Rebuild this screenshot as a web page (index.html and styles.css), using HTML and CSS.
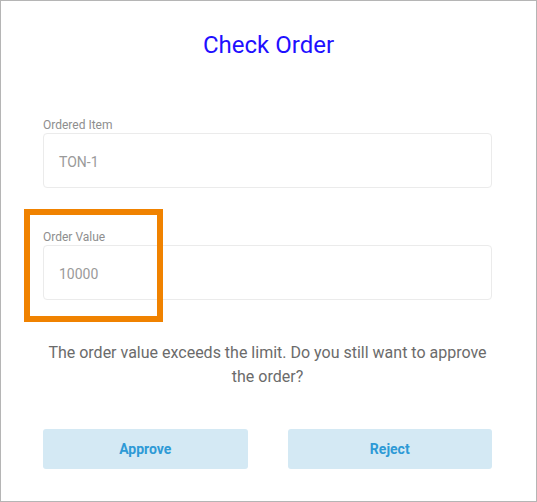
FILE: index.html
```html
<!DOCTYPE html>
<html>
<head>
<meta charset="utf-8">
<link rel="stylesheet" href="styles.css">
</head>
<body>
<div class="page">
  <h1 class="title">Check Order</h1>
  <div class="content">
    <div class="field">
      <label class="label">Ordered Item</label>
      <div class="input">TON-1</div>
    </div>
    <div class="field field-second">
      <label class="label">Order Value</label>
      <div class="input">10000</div>
    </div>
    <p class="message">The order value exceeds the limit. Do you still want to approve the order?</p>
    <div class="actions">
      <button class="btn">Approve</button>
      <button class="btn">Reject</button>
    </div>
  </div>
  <div class="highlight"></div>
</div>
</body>
</html>
```
FILE: styles.css
```css
html, body {
  margin: 0;
  padding: 0;
  background: #ffffff;
}
.page {
  position: relative;
  box-sizing: border-box;
  width: 537px;
  height: 502px;
  border: 1px solid #b5b5b5;
  font-family: Roboto, "Liberation Sans", sans-serif;
  padding-top: 29px;
}
.title {
  margin: 0;
  text-align: center;
  font-size: 24px;
  line-height: 30px;
  font-weight: 400;
  color: #1f10ff;
}
.content {
  width: 449px;
  margin-left: 42px;
  padding-top: 57px;
}
.field {
  display: flex;
  flex-direction: column;
}
.field-second {
  margin-top: 41px;
}
.label {
  font-size: 12px;
  line-height: 16px;
  color: #8e8e8e;
}
.input {
  box-sizing: border-box;
  height: 55px;
  border: 1px solid #ebebeb;
  border-radius: 4px;
  padding-left: 15px;
  padding-top: 3px;
  display: flex;
  align-items: center;
  font-size: 14px;
  color: #9a9a9a;
}
.message {
  margin: 41px 0 0;
  text-align: center;
  font-size: 16px;
  line-height: 24px;
  color: #6b6b6b;
}
.actions {
  display: grid;
  grid-template-columns: 1fr 1fr;
  gap: 40px;
  margin-top: 40px;
}
.btn {
  height: 40px;
  border: none;
  border-radius: 3px;
  background: #d4e9f4;
  color: #2e9ad6;
  font-family: Roboto, "Liberation Sans", sans-serif;
  font-size: 14px;
  font-weight: 700;
  padding: 0;
}
.highlight {
  position: absolute;
  left: 23px;
  top: 208px;
  width: 139px;
  height: 113px;
  box-sizing: border-box;
  border: 6px solid #f08200;
}
```
